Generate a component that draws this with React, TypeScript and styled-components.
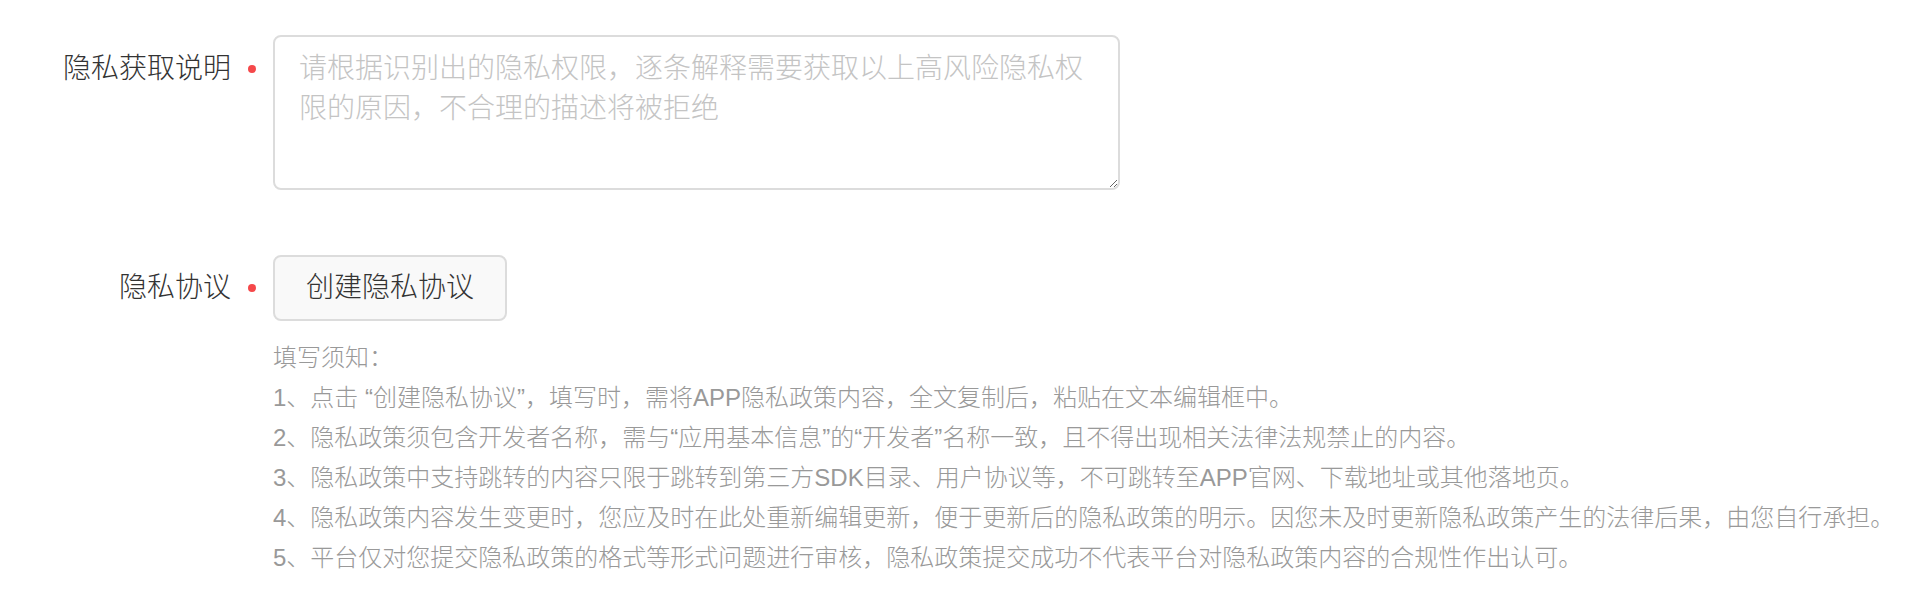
import styled, { createGlobalStyle } from "styled-components";

const GlobalStyle = createGlobalStyle`
  html, body {
    margin: 0;
    padding: 0;
    background: #fff;
  }
  body {
    font-family: "Liberation Sans", "Noto Sans CJK SC", sans-serif;
    -webkit-font-smoothing: antialiased;
  }
`;

const Form = styled.div`
  display: flex;
  flex-direction: column;
  gap: 65px;
  padding-top: 35px;
`;

const Row = styled.div`
  display: flex;
  align-items: flex-start;
`;

const LabelCell = styled.div<{ $height?: number }>`
  display: flex;
  justify-content: flex-end;
  align-items: center;
  gap: 17px;
  width: 273px;
  box-sizing: border-box;
  padding-right: 17px;
  height: ${(p) => (p.$height ? `${p.$height}px` : "auto")};
  padding-top: ${(p) => (p.$height ? "0" : "14px")};
  flex-shrink: 0;
`;

const LabelText = styled.span`
  font-size: 28px;
  line-height: 40px;
  font-weight: 300;
  color: #333;
`;

const Required = styled.span`
  width: 8px;
  height: 8px;
  border-radius: 50%;
  background: #f5484a;
  flex-shrink: 0;
`;

const Control = styled.div`
  display: flex;
  flex-direction: column;
  align-items: flex-start;
`;

const TextArea = styled.textarea`
  box-sizing: border-box;
  width: 847px;
  height: 155px;
  border: 2px solid #dcdcdc;
  border-radius: 8px;
  padding: 12px 24px;
  margin: 0;
  font-family: inherit;
  font-size: 28px;
  line-height: 40px;
  font-weight: 300;
  color: #333;
  outline: none;
  display: block;

  &::placeholder {
    color: #c4c4c4;
  }
`;

const Button = styled.button`
  box-sizing: border-box;
  width: 234px;
  height: 66px;
  border: 2px solid #dcdcdc;
  border-radius: 8px;
  background: #f9f9f9;
  font-family: inherit;
  font-size: 28px;
  line-height: 40px;
  font-weight: 300;
  color: #333;
  padding: 0;
  cursor: pointer;
`;

const Notes = styled.div`
  margin-top: 17px;
  font-size: 24px;
  line-height: 40px;
  font-weight: 300;
  color: #999;
  white-space: nowrap;
`;

const notes = [
  "填写须知：",
  "1、点击 “创建隐私协议”，填写时，需将APP隐私政策内容，全文复制后，粘贴在文本编辑框中。",
  "2、隐私政策须包含开发者名称，需与“应用基本信息”的“开发者”名称一致，且不得出现相关法律法规禁止的内容。",
  "3、隐私政策中支持跳转的内容只限于跳转到第三方SDK目录、用户协议等，不可跳转至APP官网、下载地址或其他落地页。",
  "4、隐私政策内容发生变更时，您应及时在此处重新编辑更新，便于更新后的隐私政策的明示。因您未及时更新隐私政策产生的法律后果，由您自行承担。",
  "5、平台仅对您提交隐私政策的格式等形式问题进行审核，隐私政策提交成功不代表平台对隐私政策内容的合规性作出认可。",
];

const App = () => {
  return (
    <>
      <GlobalStyle />
      <Form>
        <Row>
          <LabelCell>
            <LabelText>隐私获取说明</LabelText>
            <Required />
          </LabelCell>
          <Control>
            <TextArea placeholder="请根据识别出的隐私权限，逐条解释需要获取以上高风险隐私权限的原因，不合理的描述将被拒绝" />
          </Control>
        </Row>
        <Row>
          <LabelCell $height={66}>
            <LabelText>隐私协议</LabelText>
            <Required />
          </LabelCell>
          <Control>
            <Button>创建隐私协议</Button>
            <Notes>
              {notes.map((line) => (
                <div key={line}>{line}</div>
              ))}
            </Notes>
          </Control>
        </Row>
      </Form>
    </>
  );
};

export default App;
